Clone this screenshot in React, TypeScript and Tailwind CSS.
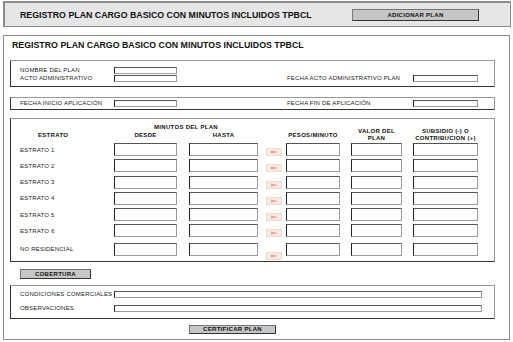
import React from "react";

const font = { fontFamily: '"Liberation Sans", Arial, sans-serif' };

function Input({ w, h = 7 }: { w: number; h?: number }) {
  return (
    <div
      className="shrink-0 bg-white border border-[#9a9a9a] border-l-[#222] border-t-[#555]"
      style={{ width: w, height: h }}
    />
  );
}

function Arrow({ mt }: { mt: number }) {
  return (
    <div
      className="ml-[8px] w-[16px] h-[8px] shrink-0 bg-[#f6ece2] border border-[#eadbcc] flex items-center justify-center"
      style={{ marginTop: mt }}
    >
      <svg width="7" height="4" viewBox="0 0 7 4">
        <polygon points="0,0.5 7,2 0,3.5" fill="#f29a9a" />
      </svg>
    </div>
  );
}

function Label({ children, w = 103 }: { children: React.ReactNode; w?: number }) {
  return (
    <div
      className="shrink-0 pl-[9px] text-[6px] tracking-[0.2px] text-[#222] leading-[7px] whitespace-nowrap"
      style={{ width: w }}
    >
      {children}
    </div>
  );
}

function Section({ h, children, className = "" }: { h: number; children: React.ReactNode; className?: string }) {
  return (
    <div
      className={`ml-[6px] w-[485px] border border-[#9a9a9a] border-l-[#333] border-b-[#333] ${className}`}
      style={{ height: h }}
    >
      {children}
    </div>
  );
}

function Btn({ children, w, h, className = "" }: { children: React.ReactNode; w: number; h: number; className?: string }) {
  return (
    <div
      className={`bg-[#c6c6c6] border border-[#777] border-r-[#333] border-b-[#333] flex items-center justify-center font-bold text-[6px] tracking-[0.3px] text-[#111] whitespace-nowrap ${className}`}
      style={{ width: w, height: h }}
    >
      {children}
    </div>
  );
}

const rows = ["ESTRATO 1", "ESTRATO 2", "ESTRATO 3", "ESTRATO 4", "ESTRATO 5", "ESTRATO 6", "NO RESIDENCIAL"];

export default function App() {
  return (
    <div className="w-[513px] h-[342px] bg-white overflow-hidden" style={font}>
      {/* Top bar */}
      <div className="mt-[1px] ml-[3px] w-[508px] h-[26px] bg-[#e6e6e6] border border-[#8c8c8c] border-t-2 border-l-2 flex items-center">
        <div className="ml-[15px] w-[332px] font-bold text-[8.8px] text-[#111] leading-[10px] whitespace-nowrap">
          REGISTRO PLAN CARGO BASICO CON MINUTOS INCLUIDOS TPBCL
        </div>
        <Btn w={127} h={12} className="mt-[1px] text-[5px] tracking-[0.2px]">
          ADICIONAR PLAN
        </Btn>
      </div>

      {/* Main panel */}
      <div className="mt-[8px] ml-[3px] w-[507px] h-[305px] border border-[#8c8c8c]">
        <div className="h-[24px] pt-[5px] pl-[8px] font-bold text-[8.8px] leading-[9px] text-[#111] whitespace-nowrap">
          REGISTRO PLAN CARGO BASICO CON MINUTOS INCLUIDOS TPBCL
        </div>

        {/* Section 1 */}
        <Section h={27} className="pt-[5px]">
          <div className="flex items-center h-[8px]">
            <Label>NOMBRE DEL PLAN</Label>
            <Input w={63} />
          </div>
          <div className="flex items-center h-[8px]">
            <Label>ACTO ADMINISTRATIVO</Label>
            <Input w={63} />
            <Label w={236}>
              <span className="pl-[101px]">FECHA ACTO ADMINISTRATIVO PLAN</span>
            </Label>
            <Input w={65} />
          </div>
        </Section>

        {/* Section 2 */}
        <Section h={13} className="mt-[10px] flex items-center">
          <Label>FECHA INICIO APLICACIÓN</Label>
          <Input w={63} />
          <Label w={236}>
            <span className="pl-[101px]">FECHA FIN DE APLICACIÓN</span>
          </Label>
          <Input w={65} />
        </Section>

        {/* Section 3 */}
        <Section h={144} className="mt-[8px] pt-[4px]">
          <div className="h-[8px] -mb-[4px] flex">
            <div className="w-[103px]" />
            <div className="w-[144px] text-center font-bold text-[6px] tracking-[0.3px] leading-[8px] text-[#111] whitespace-nowrap">
              MINUTOS DEL PLAN
            </div>
          </div>
          <div className="h-[16px] flex items-center font-bold text-[6px] tracking-[0.3px] leading-[7px] text-[#111] text-center whitespace-nowrap">
            <div className="w-[103px] pl-[27px] text-left">ESTRATO</div>
            <div className="w-[63px]">DESDE</div>
            <div className="ml-[12px] w-[69px]">HASTA</div>
            <div className="ml-[28px] w-[54px]">PESOS/MINUTO</div>
            <div className="ml-[11px] w-[51px]">
              VALOR DEL
              <br />
              PLAN
            </div>
            <div className="ml-[11px] w-[65px] -mr-[10px]">
              SUBSIDIO (-) O
              <br />
              CONTRIBUCION (+)
            </div>
          </div>
          <div className="flex flex-col gap-[3.3px]">
            {rows.map((r, i) => (
              <div key={r} className={`flex items-start h-[13px] ${i === 6 ? "mt-[2px]" : ""}`}>
                <div className="w-[103px] h-[13px] pt-[1px] flex items-center">
                  <Label>{r}</Label>
                </div>
                <Input w={63} h={13} />
                <div className="ml-[12px]">
                  <Input w={69} h={13} />
                </div>
                <Arrow mt={i === 6 ? 9 : 5} />
                <div className="ml-[4px]">
                  <Input w={54} h={13} />
                </div>
                <div className="ml-[11px]">
                  <Input w={51} h={13} />
                </div>
                <div className="ml-[11px]">
                  <Input w={65} h={13} />
                </div>
              </div>
            ))}
          </div>
        </Section>

        <Btn w={71} h={10} className="mt-[7px] ml-[16px]">
          COBERTURA
        </Btn>

        {/* Section 4 */}
        <Section h={34} className="mt-[6px] pt-[5px]">
          <div className="flex items-center h-[7px]">
            <Label>CONDICIONES COMERCIALES</Label>
            <Input w={368} />
          </div>
          <div className="flex items-center h-[7px] mt-[7px]">
            <Label>OBSERVACIONES</Label>
            <Input w={368} />
          </div>
        </Section>

        <Btn w={87} h={9} className="mt-[6px] ml-[185px]">
          CERTIFICAR PLAN
        </Btn>
      </div>
    </div>
  );
}
